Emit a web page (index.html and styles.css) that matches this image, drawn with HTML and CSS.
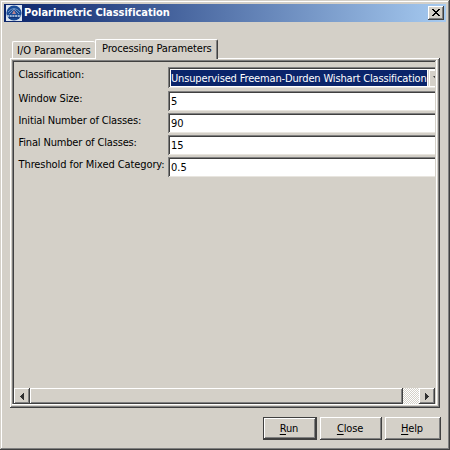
FILE: index.html
```
<!DOCTYPE html>
<html lang="en">
<head>
<meta charset="utf-8">
<title>Polarimetric Classification</title>
<link rel="stylesheet" href="styles.css">
</head>
<body>
<div class="window">
  <header class="titlebar">
    <svg class="logo" width="16" height="16" viewBox="0 0 16 16">
      <rect width="16" height="16" fill="#dce5f1"/>
      <circle cx="8" cy="8" r="7.6" fill="#194b96"/>
      <path d="M2 7Q8 0 14 7M3 9L8 4L13 9" fill="none" stroke="#6e94c4" stroke-width="1"/>
      <path d="M8 5L10 9H6Z" fill="#b9848f"/>
      <path d="M1 11H15" stroke="#c5d4e8" stroke-width="1.500" stroke-dasharray="2 .7"/>
      <path d="M3 13Q8 12 13 13" fill="none" stroke="#102f72"/>
    </svg>
    <h1 class="title">Polarimetric Classification</h1>
    <button class="close" aria-label="Close window"><svg width="8" height="7" viewBox="0 0 8 7" shape-rendering="crispEdges"><path d="M0 0h2v1h1v1h2V1h1V0h2v1H7v1H6v1H5v1h1v1h1v1h1v1H6V6H5V5H3v1H2v1H0V6h1V5h1V4h1V3H2V2H1V1H0z"/></svg></button>
  </header>
  <nav class="tabs">
    <div class="tab tab-io"><span>I/O Parameters</span></div>
    <div class="tab tab-active"><span>Processing Parameters</span></div>
  </nav>
  <main class="panel">
    <div class="viewport">
      <div class="form">
        <label class="l-class">Classification:</label>
        <div class="field combo"><span class="selected">Unsupervised Freeman-Durden Wishart Classification</span><span class="drop"><svg width="7" height="4" viewBox="0 0 7 4"><path d="M0 0H7L3.500 4Z" fill="#404040"/></svg></span></div>
        <label class="l-window">Window Size:</label><div class="field">5</div>
        <label class="l-initial">Initial Number of Classes:</label><div class="field">90</div>
        <label class="l-final">Final Number of Classes:</label><div class="field">15</div>
        <label class="l-threshold">Threshold for Mixed Category:</label><div class="field">0.5</div>
      </div>
      <div class="scrollbar">
        <div class="arrow"><svg width="4" height="7" viewBox="0 0 4 7" shape-rendering="crispEdges"><path d="M3 0h1v7H3V6H2V5H1V4H0V3h1V2h1V1h1z" fill="#303030"/></svg></div>
        <div class="thumb"></div>
        <div class="track"></div>
        <div class="arrow"><svg width="4" height="7" viewBox="0 0 4 7" shape-rendering="crispEdges"><path d="M0 0h1v1h1v1h1v1h1v1H3v1H2v1H1v1H0z" fill="#303030"/></svg></div>
      </div>
    </div>
  </main>
  <footer class="actions">
    <button class="btn run"><span><u>R</u>un</span></button>
    <button class="btn cls"><span><u>C</u>lose</span></button>
    <button class="btn help"><span><u>H</u>elp</span></button>
  </footer>
</div>
</body>
</html>
```
FILE: styles.css
```
* { box-sizing: border-box; }
body { margin: 0; overflow: hidden; font: 11px/14px "DejaVu Sans Condensed", "DejaVu Sans", sans-serif; font-stretch: condensed; color: #000; }
svg { display: block; flex: none; }
.window {
  width: 450px; height: 450px; padding: 4px; background: #d4d0c8;
  display: flex; flex-direction: column;
  box-shadow: inset -1px -1px #404040, inset 1px 1px #d4d0c8, inset -2px -2px #808080, inset 2px 2px #fff;
}
.titlebar { height: 18px; display: flex; align-items: center; padding: 0 2px; background: linear-gradient(90deg, #0a246a, #a6caf0); }
.title { margin: 0 auto 0 2px; font-size: 11px; line-height: 18px; color: #fff; white-space: nowrap; letter-spacing: -.02px; }
.close { width: 16px; height: 14px; padding: 0 1px 1px 0; border: 0; display: flex; align-items: center; justify-content: center; background: #d4d0c8; box-shadow: inset -1px -1px #404040, inset 1px 1px #fff, inset -2px -2px #808080; }
.tabs { height: 36px; padding-left: 8px; display: flex; align-items: flex-end; flex: none; }
.tab { white-space: nowrap; border: 1px solid #fff; border-bottom: 0; border-radius: 2px 2px 0 0; }
.tab-io { width: 83px; height: 17px; padding: 2px 0 0 4px; border-right: 0; }
.tab-active { width: 123px; height: 20px; margin-bottom: -1px; padding: 2px 0 0 6px; letter-spacing: -.14px; border-right-color: #404040; background: #d4d0c8; box-shadow: inset -1px 0 #808080; z-index: 1; }
.panel {
  width: 430px; height: 350px; margin-left: 6px; padding: 2px; flex: none;
  box-shadow: inset -1px -1px #404040, inset 1px 1px #fff, inset -2px -2px #808080;
}
.viewport {
  height: 345px; width: 425px; padding: 2px 2px 1px; overflow: hidden; display: flex; flex-direction: column; justify-content: space-between;
  box-shadow: inset -1px -1px #fff, inset 1px 1px #808080, inset -2px 0 #d4d0c8, inset 2px 2px #404040;
}
.form { display: grid; grid-template-columns: 149.5px 267px; grid-template-rows: 24px repeat(4, 22px); padding: 5px 0 0 4.5px; }
label { white-space: nowrap; padding-top: 1px; letter-spacing: -.16px; }
.l-class { letter-spacing: -.22px; }
.l-threshold { letter-spacing: -.09px; }
.field { height: 20px; padding: 2px 0 0 3px; background: #fff; box-shadow: inset 1px 1px #808080, inset 0 -1px #e8e5df, inset 2px 2px #404040; line-height: 17px; }
.combo { height: 21px; display: flex; padding: 3px 0 2px 3px; }
.selected { width: 256px; background: #0a246a; color: #fff; line-height: 17px; white-space: nowrap; letter-spacing: -.15px; }
.drop { width: 8px; overflow: hidden; background: #d4d0c8; display: flex; align-items: center; padding-left: 4px; box-shadow: inset 1px 1px #fff; margin-left: 1px; border-left: 1px solid #d4d0c8; }
.scrollbar { height: 16px; display: flex; }
.arrow, .thumb { background: #d4d0c8; box-shadow: inset -1px -1px #404040, inset 1px 1px #fff, inset -2px -2px #808080; }
.arrow { width: 16px; display: flex; align-items: center; justify-content: center; }
.thumb { width: 373px; }
.track { width: 16px; background: repeating-conic-gradient(#fff 0 25%, #d4d0c8 0 50%) 0 0 / 2px 2px; }
.actions { display: flex; justify-content: flex-end; gap: 3px; padding: 9px 5px 0 0; }
.btn { height: 23px; padding: 0 2px 0 0; border: 0; font: inherit; color: #000; background: #d4d0c8; box-shadow: inset -1px -1px #404040, inset 1px 1px #fff, inset -2px -2px #808080; letter-spacing: -.15px; }
.run { width: 54px; box-shadow: inset 0 0 0 1px #404040, inset -2px -2px #404040, inset 2px 2px #fff, inset -3px -3px #808080; }
.cls { width: 62px; }
.help { width: 56px; }
u { text-underline-offset: 2px; }
```
